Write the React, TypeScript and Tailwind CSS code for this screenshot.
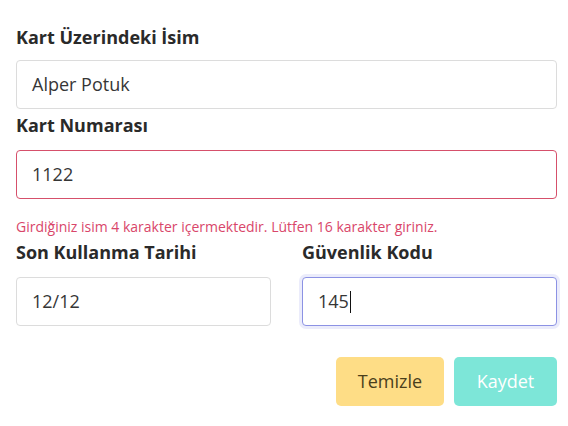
import React from 'react';

const font = { fontFamily: '"Open Sans", "Noto Sans", sans-serif' };

const Field: React.FC<{ value: string; state?: 'normal' | 'error' | 'focus' }> = ({ value, state = 'normal' }) => {
  const border =
    state === 'error'
      ? 'border-[#d6506b]'
      : state === 'focus'
      ? 'border-[#8c92e4] shadow-[0_0_0_3px_rgba(120,128,230,0.15)]'
      : 'border-[#dcdcdc]';
  return (
    <div className={`h-[49px] rounded-[4px] border bg-white pl-[15px] flex items-center text-[18px] text-[#363636] ${border}`}>
      <span>{value}</span>
      {state === 'focus' && <span className="ml-px inline-block h-[22px] w-px bg-[#111]" />}
    </div>
  );
};

const Label: React.FC<{ children: React.ReactNode; className?: string }> = ({ children, className = '' }) => (
  <div className={`h-[27px] leading-[27px] text-[18px] font-bold text-[#2a2a2a] ${className}`}>{children}</div>
);

export default function App() {
  return (
    <div className="min-h-[426px] w-[568px] bg-white" style={font}>
      <div className="w-[541px] ml-4 pt-[24px]">
        <Label className="mb-[9px]">Kart Üzerindeki İsim</Label>
        <Field value="Alper Potuk" />

        <Label className="mt-[3px] mb-[11px]">Kart Numarası</Label>
        <Field value="1122" state="error" />
        <div className="mt-[17px] h-[21px] leading-[21px] text-[14px] text-[#d9466a]">
          Girdiğiniz isim 4 karakter içermektedir. Lütfen 16 karakter giriniz.
        </div>

        <div className="grid grid-cols-2 gap-x-[31px] mt-[2px]">
          <div>
            <Label className="mb-[11px]">Son Kullanma Tarihi</Label>
            <Field value="12/12" />
          </div>
          <div>
            <Label className="mb-[11px]">Güvenlik Kodu</Label>
            <Field value="145" state="focus" />
          </div>
        </div>

        <div className="mt-[31px] flex justify-end gap-[10px]">
          <button className="h-[49px] w-[108px] rounded-[5px] bg-[#fedd86] text-[18px] text-[#4a3f1c]">Temizle</button>
          <button className="h-[49px] w-[103px] rounded-[5px] bg-[#7de6d8] text-[18px] text-white">Kaydet</button>
        </div>
      </div>
    </div>
  );
}
